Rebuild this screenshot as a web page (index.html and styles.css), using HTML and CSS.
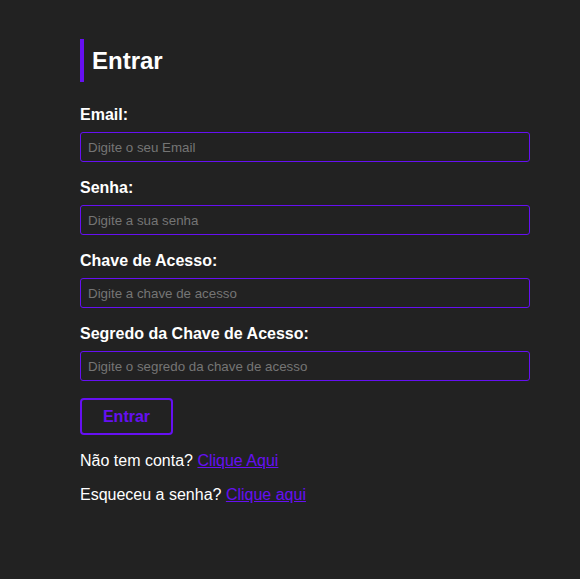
FILE: index.html
```html
<!DOCTYPE html>
<html lang="pt">
<head>
<meta charset="utf-8">
<title>Entrar</title>
<link rel="stylesheet" href="styles.css">
</head>
<body>
<main class="container">
  <h1 class="title">Entrar</h1>
  <form class="form">
    <label class="label" for="email">Email:</label>
    <input class="input" id="email" type="email" placeholder="Digite o seu Email">
    <label class="label" for="senha">Senha:</label>
    <input class="input" id="senha" type="password" placeholder="Digite a sua senha">
    <label class="label" for="chave">Chave de Acesso:</label>
    <input class="input" id="chave" type="text" placeholder="Digite a chave de acesso">
    <label class="label" for="segredo">Segredo da Chave de Acesso:</label>
    <input class="input" id="segredo" type="text" placeholder="Digite o segredo da chave de acesso">
    <button class="button" type="button">Entrar</button>
  </form>
  <p class="text">Não tem conta? <a class="link" href="#">Clique Aqui</a></p>
  <p class="text">Esqueceu a senha? <a class="link" href="#">Clique aqui</a></p>
</main>
</body>
</html>
```

FILE: styles.css
```css
html, body {
  margin: 0;
  padding: 0;
  background: #222222;
  color: #ffffff;
  font-family: "Liberation Sans", Arial, sans-serif;
}
.container {
  width: 450px;
  padding: 39px 0 0 80px;
}
.title {
  margin: 0 0 24px 0;
  border-left: 4px solid #6610f2;
  padding: 8px 0 7px 8px;
  font-size: 24px;
  line-height: 28px;
  font-weight: bold;
}
.form {
  display: flex;
  flex-direction: column;
}
.label {
  font-size: 16px;
  line-height: 18px;
  font-weight: bold;
  margin-bottom: 8px;
}
.input {
  box-sizing: border-box;
  width: 450px;
  height: 30px;
  margin: 0 0 17px 0;
  padding: 0 7px;
  background: #222222;
  border: 1px solid #6610f2;
  border-radius: 3px;
  color: #ffffff;
  font-family: "Liberation Sans", Arial, sans-serif;
  font-size: 13.333px;
  outline: none;
}
.input::placeholder {
  color: #757575;
}
.button {
  align-self: flex-start;
  box-sizing: border-box;
  width: 93px;
  height: 37px;
  padding: 0;
  background: transparent;
  border: 2px solid #6610f2;
  border-radius: 4px;
  color: #6610f2;
  font-family: "Liberation Sans", Arial, sans-serif;
  font-size: 16px;
  font-weight: bold;
}
.text {
  margin: 17px 0 0 0;
  font-size: 16px;
  line-height: 18px;
}
.text + .text {
  margin-top: 16px;
}
.link {
  color: #6610f2;
}
```
